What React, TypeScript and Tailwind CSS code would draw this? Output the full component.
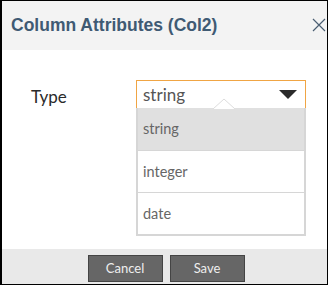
import React, { useState } from "react";

const options = ["string", "integer", "date"];

const App = () => {
  const [value, setValue] = useState("string");

  return (
    <div className="w-[328px] h-[285px] flex flex-col bg-white border-t border-b border-r border-black border-l-2 overflow-hidden font-['Lato',sans-serif]">
      <div className="h-[49px] shrink-0 bg-[#f3f3f3] flex items-center justify-between pl-[9px] pr-[1px]">
        <div className="text-[17.5px] font-bold text-[#3f5a73] font-['Liberation_Sans',Arial,sans-serif]">
          Column Attributes (Col2)
        </div>
        <svg width="14" height="14" viewBox="0 0 14 14" className="mb-[2px]">
          <path d="M1 1 L13 13 M13 1 L1 13" stroke="#4a5e72" strokeWidth="1.2" />
        </svg>
      </div>

      <div className="flex-1 flex pt-[30px]">
        <div className="w-[134px] pl-[29px] pt-[4px] text-[17px] text-[#2a2a2a]">Type</div>
        <div className="w-[170px] flex flex-col">
          <div className="relative h-[28px] border border-b-0 border-[#f0a544] flex items-center justify-between pl-[6px] pr-[8px]">
            <span className="text-[17px] text-[#555] leading-none">{value}</span>
            <svg width="18" height="9" viewBox="0 0 18 9">
              <path d="M0 0 H18 L9 9 Z" fill="#2b2b2b" />
            </svg>
            <svg width="22" height="11" viewBox="0 0 22 11" className="absolute left-[76px] bottom-[-1px]">
              <path d="M0 11 L11 1 L22 11" fill="white" stroke="#dcdcdc" strokeWidth="1" />
            </svg>
          </div>
          <div className="border-2 border-t-0 border-[#d6d6d6] flex flex-col">
            {options.map((o, i) => (
              <div
                key={o}
                onClick={() => setValue(o)}
                className={
                  "h-[42px] flex items-center pl-[5px] text-[14.5px] text-[#666] " +
                  (o === value ? "bg-[#e0e0e0]" : "bg-white") +
                  (i > 0 ? " border-t border-[#d6d6d6]" : "")
                }
              >
                {o}
              </div>
            ))}
          </div>
        </div>
      </div>

      <div className="h-[35px] shrink-0 bg-[#e9e9e9] flex justify-center gap-[7px] pt-[6px] pl-[3px]">
        <button className="w-[75px] h-[27px] bg-[#666] border border-[#444] text-[#eee] text-[13px]">
          Cancel
        </button>
        <button className="w-[75px] h-[27px] bg-[#666] border border-[#444] text-[#eee] text-[13px]">
          Save
        </button>
      </div>
    </div>
  );
};

export default App;
